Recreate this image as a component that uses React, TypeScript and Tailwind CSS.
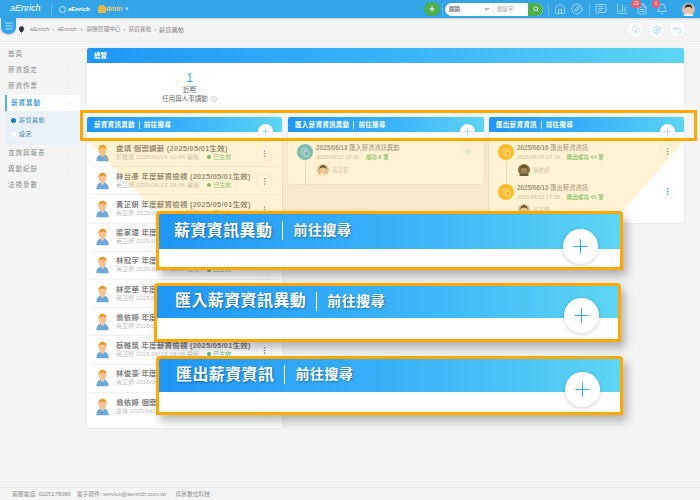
import React from "react";
import { Home, Compass, MessageSquareText, FileText, Bell, Eye, Info, ChevronRight, ChevronDown, Plus, Search, MapPin, EllipsisVertical, CloudUpload, Settings, Undo2, Menu, Copy, ChartColumn } from "lucide-react";

const font = "[font-family:'Liberation_Sans','Noto_Sans_CJK_TC',sans-serif]";
const grad = "bg-[linear-gradient(90deg,#2096f5,#3cb4f8_55%,#5dd5f2)]";

function Person({ className = "" }: { className?: string }) {
  return (
    <svg viewBox="0 0 20 26" className={className}>
      <path d="M1 25c0-6 3-9 6-10h6c3 1 6 4 6 10z" fill="#6fa8d8" />
      <path d="M7 14h6l-1 4h-4z" fill="#f6c9a0" />
      <ellipse cx="10" cy="9.5" rx="5.4" ry="6.6" fill="#f3c295" />
      <path d="M4.2 9C3.6 3.6 7 1 10.6 1c3.6 0 5.8 3 5.2 8-.8-2.4-2-3.6-3.6-3.8-2.4.6-5.4.4-6.4 1z" fill="#e09a2c" />
    </svg>
  );
}

function Face({ className = "", dark = false }: { className?: string; dark?: boolean }) {
  return (
    <svg viewBox="0 0 20 20" className={className}>
      <circle cx="10" cy="10" r="10" fill={dark ? "#6a5a48" : "#cfc3b4"} />
      <ellipse cx="10" cy="11" rx="5" ry="6" fill={dark ? "#8a7660" : "#efc4a6"} />
      <path d="M4 9c0-5 3-7 6-7s6 2 6 7c-2-3-4-3-6-3S6 6 4 9z" fill="#3a2c22" />
      <path d="M2 20c1-3 4-4 8-4s7 1 8 4z" fill={dark ? "#4a4036" : "#f5f0e8"} />
    </svg>
  );
}

function SideItem({ label, arrow }: { label: string; arrow?: boolean }) {
  return (
    <div className="flex h-[16px] items-center justify-between pl-[8px] pr-[8px] text-[6.5px] tracking-[1px] text-[#8a8a8a]">
      <span>{label}</span>
      {arrow && <ChevronRight className="h-[7px] w-[7px] text-[#dddddd]" />}
    </div>
  );
}

function CardHead({ title, plus = true }: { title: string; plus?: boolean }) {
  return (
    <div className={`relative flex h-[15px] items-center rounded-t-[2px] pl-[7px] text-[6.5px] font-bold tracking-[.3px] text-white ${grad}`}>
      <span>{title}</span>
      <span className="mx-[4px] h-[8px] w-px bg-white/80" />
      <span>前往搜尋</span>
      {plus && (
        <span className="absolute right-[9px] top-[7px] flex h-[15px] w-[15px] items-center justify-center rounded-full bg-white shadow-[0_1px_3px_rgba(0,0,0,.15)]">
          <Plus className="h-[11px] w-[11px] text-[#5aaee8]" strokeWidth={1} />
        </span>
      )}
    </div>
  );
}

const rows = [
  ["盧靖 個案調薪 (2025/05/01生效)", "蔡雅筑 2025/06/24 10:44 編輯"],
  ["林台彥 年度薪資檢視 (2025/05/01生效)", "黃芷妍 2025/06/13 18:06 編輯"],
  ["黃芷妍 年度薪資檢視 (2025/05/01生效)", "黃芷妍 2025/06/13 18:06 編輯"],
  ["張家瑋 年度薪資檢視 (2025/05/01生效)", "黃芷妍 2025/06/13 18:06 編輯"],
  ["林冠宇 年度薪資檢視 (2025/05/01生效)", "黃芷妍 2025/06/13 18:06 編輯"],
  ["林奕華 年度薪資檢視 (2025/05/01生效)", "黃芷妍 2025/06/13 18:06 編輯"],
  ["翁依婷 年度薪資檢視 (2025/05/01生效)", "黃芷妍 2025/06/13 18:06 編輯"],
  ["蔡雅筑 年度薪資檢視 (2025/05/01生效)", "黃芷妍 2025/06/13 18:06 編輯"],
  ["林俊豪 年度薪資檢視 (2025/05/01生效)", "黃芷妍 2025/06/13 18:06 編輯"],
  ["翁依婷 個案調薪 (2025/05/01生效)", "盧靖 2025/04/28 10:20 編輯"],
];

function Dots({ className = "" }: { className?: string }) {
  return (
    <span className={`flex h-[15px] w-[15px] shrink-0 items-center justify-center rounded-full bg-white shadow-[0_0_2px_rgba(0,0,0,.12)] ${className}`}>
      <EllipsisVertical className="h-[9px] w-[9px] text-[#3d9ad6]" strokeWidth={2} />
    </span>
  );
}

function Row({ title, sub, last }: { title: string; sub: string; last?: boolean }) {
  return (
    <div className={`flex h-[28.2px] items-center pl-[2px] pr-[6px] ${last ? "" : "border-b border-[#f0f0f0]"}`}>
      <Person className="ml-[2px] h-[18px] w-[15px] shrink-0" />
      <div className="ml-[6px] min-w-0 flex-1">
        <div className="whitespace-nowrap text-[7.4px] font-semibold leading-[9px] tracking-[.3px] text-[#808080]">{title}</div>
        <div className="flex items-center whitespace-nowrap text-[5.9px] leading-[9px] tracking-[.2px] text-[#c2c2c2]">
          <span>{sub}</span>
          <span className="ml-[8px] h-[4px] w-[4px] rounded-full bg-[#5fb878]" />
          <span className="ml-[2px] text-[#6cc186]">已生效</span>
        </div>
      </div>
      <Dots className="mt-[2px]" />
    </div>
  );
}

function Timeline({ date, kind, sub, result, who, tone, dark, action, line }: { date: string; kind: string; sub: string; result: string; who: string; tone: string; dark?: boolean; action: React.ReactNode; line?: boolean }) {
  return (
    <div className="relative flex h-[40px] pl-[9px] pr-[9px]">
      {line && <span className="absolute left-[17px] top-[18px] h-[24px] w-px bg-[#e4e0d4]" />}
      <span className={`relative mt-[1px] flex h-[16px] w-[16px] shrink-0 items-center justify-center rounded-full ${tone}`}>
        <Copy className="h-[9px] w-[9px] text-white" strokeWidth={1.5} />
      </span>
      <div className="ml-[3px] min-w-0 flex-1">
        <div className="whitespace-nowrap text-[6.3px] font-semibold leading-[9px] text-[#8a8a8a]">{date} <span className="font-normal">{kind}</span></div>
        <div className="mt-[1px] flex whitespace-nowrap text-[5.5px] leading-[9px] text-[#c2c2c2]">
          <span>{sub}</span>
          <span className="ml-[7px] font-semibold text-[#7cc98f]">{result}</span>
        </div>
        <div className="mt-[2px] flex items-center pl-[1px]">
          <Face dark={dark} className="h-[12px] w-[12px]" />
          <span className="ml-[3px] text-[5.5px] text-[#c2c2c2]">{who}</span>
        </div>
      </div>
      <div className="mt-[1px]">{action}</div>
    </div>
  );
}

function Callout({ pos, head, title, textLeft }: { pos: string; head: string; title: string; textLeft: string }) {
  return (
    <div className={`absolute z-30 overflow-hidden rounded-t-[4px] border-[3px] border-[#ffa900] bg-white shadow-[4px_6px_10px_rgba(0,0,0,.28)] ${pos}`}>
      <div className={`flex items-center pb-[2px] ${head} ${textLeft} font-semibold text-white [text-shadow:1px_1px_2px_rgba(0,0,0,.35)] ${grad}`}>
        <span className="text-[16px] tracking-[.4px]">{title}</span>
        <span className="mx-[10px] h-[19px] w-px bg-white" />
        <span className="text-[14px] tracking-[.5px]">前往搜尋</span>
      </div>
    </div>
  );
}

function CalloutPlus({ pos }: { pos: string }) {
  return (
    <span className={`absolute z-40 flex h-[35px] w-[35px] items-center justify-center rounded-full bg-white shadow-[0_1px_4px_rgba(0,0,0,.2)] ${pos}`}>
      <Plus className="h-[23px] w-[23px] text-[#2aa3ee]" strokeWidth={1} />
    </span>
  );
}

function HeaderIcons() {
  return (
    <div className="flex items-center">
      <span className="ml-[5px] mr-[4px] h-[12px] w-px bg-white/25" />
      <Home className="ml-[1px] h-[12px] w-[12px] text-[#e2f4fd]" strokeWidth={1.2} />
      <Compass className="ml-[5px] h-[12px] w-[12px] text-[#e2f4fd]" strokeWidth={1.2} />
      <span className="ml-[6px] mr-[5px] h-[12px] w-px bg-white/25" />
      <MessageSquareText className="h-[12px] w-[12px] text-[#e2f4fd]" strokeWidth={1.2} />
      <ChartColumn className="ml-[9px] h-[12px] w-[12px] text-[#e2f4fd]" strokeWidth={1.2} />
      <span className="relative ml-[8px]">
        <FileText className="h-[12px] w-[12px] text-[#e2f4fd]" strokeWidth={1.2} />
        <span className="absolute -left-[5px] -top-[3px] flex h-[8px] w-[10px] items-center justify-center rounded-full bg-[#ee5a70] text-[4.5px] text-white">13</span>
      </span>
      <span className="relative ml-[8px]">
        <Bell className="h-[12px] w-[12px] text-[#e2f4fd]" strokeWidth={1.2} />
        <span className="absolute -left-[4px] -top-[3px] flex h-[8px] w-[8px] items-center justify-center rounded-full bg-[#ee5a70] text-[4.5px] text-white">1</span>
      </span>
      <Face className="ml-[14px] h-[13px] w-[13px]" />
    </div>
  );
}

export default function App() {
  return (
    <div className={`relative flex h-[500px] w-[700px] flex-col overflow-hidden bg-[#f4f4f4] ${font}`}>
      {/* top bar */}
      <header className="flex h-[18px] shrink-0 items-center bg-[#33a4e6] pl-[10px] pr-[5px] shadow-[0_1px_2px_rgba(0,0,0,.15)]">
        <span className="w-[33px] text-[9px] italic text-white">aEnrich</span>
        <span className="ml-[8px] h-[13px] w-px bg-white/25" />
        <span className="ml-[7px] h-[7px] w-[7px] rounded-full border border-[#bfeaff]" />
        <span className="ml-[2px] text-[6px] font-bold text-white">aEnrich</span>
        <span className="ml-[8px] h-[8px] w-[8px] rounded-t-full bg-[#e9b64a]" />
        <span className="text-[7px] font-bold text-[#e6cf7a]">dmin</span>
        <span className="ml-[1px] text-[6px] text-[#bcd9ee]">▼</span>
        <span className="ml-auto flex h-[14px] w-[16px] items-center justify-center rounded-full bg-[#4cae4f]">
          <Plus className="h-[8px] w-[8px] text-white" strokeWidth={3} />
        </span>
        <span className="mx-[2px] h-[13px] w-px bg-white/20" />
        <div className="flex h-[13px] w-[98px] items-center overflow-hidden rounded-full bg-white text-[5.5px] text-[#777777]">
          <span className="ml-[4px] font-semibold">開銷</span>
          <ChevronDown className="ml-auto h-[6px] w-[6px] text-[#333333]" strokeWidth={3} />
          <span className="ml-[3px] h-full w-px bg-[#eeeeee]" />
          <span className="ml-[3px] w-[31px] text-[#aaaaaa]">關鍵字</span>
          <span className="flex h-full w-[15px] items-center justify-center bg-[#4cae4f]">
            <Search className="h-[6px] w-[6px] text-white" strokeWidth={3} />
          </span>
        </div>
        <HeaderIcons />
      </header>

      {/* breadcrumb */}
      <div className="flex h-[24px] shrink-0 items-center border-b border-[#ececec] pl-[18px] pr-[15px] text-[5.7px] text-[#8c8c8c]">
        <MapPin className="h-[7px] w-[7px] fill-[#333333] text-[#333333]" />
        <span className="ml-[5px]">aEnrich</span>
        <span className="mx-[3px]">›</span>
        <span>aEnrich</span>
        <span className="mx-[4px]">›</span>
        <span>薪酬管理中心</span>
        <span className="mx-[3px]">›</span>
        <span>薪資異動</span>
        <span className="mx-[3px]">›</span>
        <span className="text-[6.2px]">薪資異動</span>
        <div className="ml-auto flex gap-[6px]">
          {[CloudUpload, Settings, Undo2].map((I, i) => (
            <span key={i} className="flex h-[15px] w-[15px] items-center justify-center rounded-full bg-white shadow-[0_0_2px_rgba(0,0,0,.08)]">
              <I className="h-[10px] w-[10px] text-[#68bdea]" strokeWidth={1.2} />
            </span>
          ))}
        </div>
      </div>

      {/* body */}
      <div className="flex min-h-0 flex-1">
        <aside className="w-[80px] shrink-0 pt-[4px]">
          <SideItem label="首頁" />
          <SideItem label="薪資設定" arrow />
          <SideItem label="薪資作業" arrow />
          <div className="ml-[5px] mt-[1px] flex h-[16px] items-center justify-between border-l-[2px] border-[#4fb0ea] bg-white pl-[4px] pr-[6px] text-[6.5px] font-semibold tracking-[1px] text-[#4c9fd6]">
            <span>薪資異動</span>
            <ChevronDown className="h-[7px] w-[7px] text-[#dddddd]" />
          </div>
          <div className="ml-[5px] h-[34px] bg-[#e9f1f6] pl-[6px] pt-[3px] text-[6px] tracking-[.5px] text-[#4c88b5]">
            <div className="flex h-[13px] items-center gap-[3px]"><span className="h-[5px] w-[5px] rounded-full bg-[#1f7fb5]" />薪資異動</div>
            <div className="flex h-[14px] items-center gap-[3px]"><span className="h-[5px] w-[5px] rounded-full bg-white" />設定</div>
          </div>
          <SideItem label="查詢與報表" arrow />
          <SideItem label="異動紀錄" arrow />
          <SideItem label="法規參數" />
        </aside>

        <main className="w-[604px] shrink-0 pl-[7px] pt-[6px]">
          <section className="h-[62px] w-[597px] rounded-t-[2px] bg-white shadow-[0_0_2px_rgba(0,0,0,.08)]">
            <div className={`flex h-[15px] items-center rounded-t-[2px] pl-[7px] text-[6.5px] font-bold text-white ${grad}`}>總覽</div>
            <div className="w-[205px] pt-[8px] text-center text-[#6e6e6e]">
              <div className="text-[12px] leading-[14px] text-[#3ba6ea]">1</div>
              <div className="text-[6.5px] leading-[9px]">近期</div>
              <div className="flex items-center justify-center text-[6.5px] leading-[10px]">任用與人事調動<Info className="ml-[3px] h-[6px] w-[6px] text-[#aaaaaa]" /></div>
            </div>
          </section>

          <div className="mt-[7px] flex items-start">
            <section className="h-[311px] w-[195px] rounded-[2px] bg-white shadow-[0_0_2px_rgba(0,0,0,.12)]">
              <CardHead title="薪資資訊異動" />
              <div className="px-[4px] pt-[7px]">
                {rows.map((r, i) => <Row key={i} title={r[0]} sub={r[1]} last={i === rows.length - 1} />)}
              </div>
            </section>
            <section className="ml-[6px] h-[67px] w-[196px] rounded-[2px] bg-white shadow-[0_0_2px_rgba(0,0,0,.12)]">
              <CardHead title="匯入薪資資訊異動" />
              <div className="pt-[11px]">
                <Timeline date="2025/06/13" kind="匯入薪資資訊異動" sub="2025/06/13 18:06" result="成功 8 筆" who="黃芷妍" tone="bg-[#5dbcd9]" action={<span className="flex h-[15px] w-[15px] items-center justify-center rounded-full bg-white shadow-[0_0_2px_rgba(0,0,0,.12)]"><Eye className="h-[9px] w-[9px] text-[#9fd3d8]" strokeWidth={1.3} /></span>} line />
              </div>
            </section>
            <section className="ml-[5px] h-[106px] w-[195px] rounded-[2px] bg-white shadow-[0_0_2px_rgba(0,0,0,.12)]">
              <CardHead title="匯出薪資資訊" />
              <div className="pt-[11px]">
                <Timeline date="2025/06/16" kind="匯出薪資資訊" sub="2025/06/16 17:29" result="匯出成功 44 筆" who="翁依婷" dark tone="bg-[#fcb92c]" action={<Dots />} line />
                <Timeline date="2025/06/13" kind="匯出薪資資訊" sub="2025/06/13 17:56" result="匯出成功 45 筆" who="黃芷妍" tone="bg-[#fcb92c]" action={<Dots />} />
              </div>
            </section>
          </div>
        </main>
      </div>

      {/* footer */}
      <footer className="flex h-[13px] shrink-0 items-center border-t border-[#ececec] pl-[12px] text-[5.8px] text-[#8f8f8f]">
        <span>客服電話: 0225178080</span>
        <span className="ml-[6px]">電子郵件: service@aenrich.com.tw</span>
        <span className="ml-[9px]">育碁數位科技</span>
      </footer>

      {/* overlays */}
      <span className="absolute left-[1px] top-[18px] z-10 flex h-[16px] w-[15px] items-center justify-center rounded-b-[7px] bg-[#33a4e6] shadow-[0_1px_2px_rgba(0,0,0,.2)]">
        <Menu className="h-[10px] w-[10px] text-white" strokeWidth={1.5} />
      </span>
      <div className="absolute left-[87px] top-[141px] z-10 h-[71px] w-[597px] bg-[rgba(255,195,40,.2)] [clip-path:polygon(0_0,100%_0,535px_100%,70px_100%)]" />
      <div className="absolute left-[80px] top-[110px] z-20 h-[31px] w-[617px] border-[3px] border-[#ffa900]" />

      <Callout pos="left-[156px] top-[211px] h-[59px] w-[467px]" head="h-[35px]" textLeft="pl-[15px]" title="薪資資訊異動" />
      <CalloutPlus pos="left-[563px] top-[229px]" />
      <Callout pos="left-[154px] top-[283px] h-[59px] w-[467px]" head="h-[32px]" textLeft="pl-[18px]" title="匯入薪資資訊異動" />
      <CalloutPlus pos="left-[564px] top-[298px]" />
      <Callout pos="left-[156px] top-[356px] h-[59px] w-[467px]" head="h-[33px]" textLeft="pl-[17px]" title="匯出薪資資訊" />
      <CalloutPlus pos="left-[565px] top-[372px]" />
    </div>
  );
}
